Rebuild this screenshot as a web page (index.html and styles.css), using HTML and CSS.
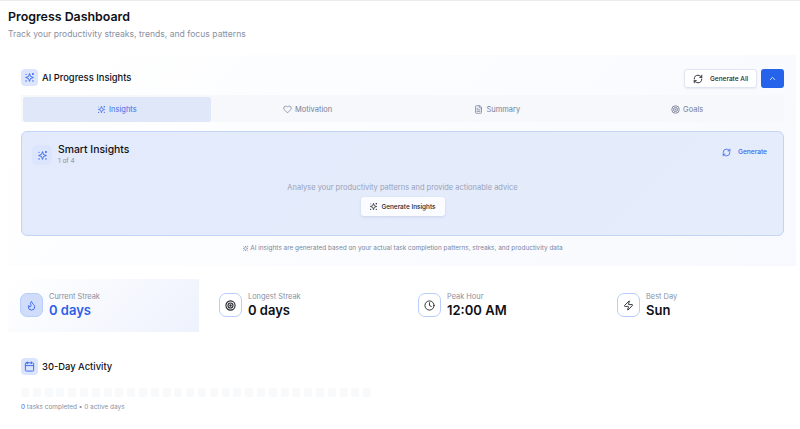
FILE: index.html
```html
<!DOCTYPE html>
<html lang="en">
<head>
<meta charset="utf-8">
<title>Progress Dashboard</title>
<link rel="stylesheet" href="styles.css">
</head>
<body>
<svg class="defs" width="0" height="0" aria-hidden="true">
  <symbol id="i-sparkle" viewBox="0 0 24 24">
    <path d="M12 3.500l2.200 6.300 6.300 2.200-6.300 2.200L12 20.500l-2.200-6.300L3.500 12l6.300-2.200z" fill="none" stroke="currentColor" stroke-width="2" stroke-linejoin="round"/>
    <circle cx="19.500" cy="4.500" r="2.100" fill="currentColor"/>
    <circle cx="19.500" cy="19.500" r="1.700" fill="currentColor"/>
    <circle cx="4.500" cy="19.500" r="1.700" fill="currentColor"/>
    <circle cx="4.500" cy="5" r="1.300" fill="currentColor"/>
  </symbol>
  <symbol id="i-refresh" viewBox="0 0 24 24">
    <path d="M3 12a9 9 0 0 1 9-9 9.750 9.750 0 0 1 6.740 2.740L21 8M21 3v5h-5M21 12a9 9 0 0 1-9 9 9.750 9.750 0 0 1-6.740-2.740L3 16M8 16H3v5" fill="none" stroke="currentColor" stroke-width="2.200" stroke-linecap="round" stroke-linejoin="round"/>
  </symbol>
</svg>
<main class="page">
  <header class="head">
    <h1>Progress Dashboard</h1>
    <p>Track your productivity streaks, trends, and focus patterns</p>
  </header>

  <section class="panel">
    <div class="panel-top">
      <div class="title-row">
        <span class="badge"><svg class="ic-badge"><use href="#i-sparkle"/></svg></span>
        <h2>AI Progress Insights</h2>
      </div>
      <div class="actions">
        <button class="btn-all"><svg class="ic-btn"><use href="#i-refresh"/></svg><span>Generate All</span></button>
        <button class="btn-up"><svg class="ic-sm" viewBox="0 0 24 24"><path d="M6 15l6-6 6 6" fill="none" stroke="currentColor" stroke-width="2.500" stroke-linecap="round" stroke-linejoin="round"/></svg></button>
      </div>
    </div>

    <nav class="tabs">
      <div class="tab active"><svg class="ic-sm"><use href="#i-sparkle"/></svg>Insights</div>
      <div class="tab"><svg class="ic-sm" viewBox="0 0 24 24"><path d="M19 14c1.490-1.460 3-3.210 3-5.500A5.500 5.500 0 0 0 16.500 3c-1.760 0-3 .5-4.500 2-1.500-1.500-2.740-2-4.500-2A5.500 5.500 0 0 0 2 8.500c0 2.300 1.500 4.050 3 5.500l7 7Z" fill="none" stroke="currentColor" stroke-width="2" stroke-linejoin="round"/></svg>Motivation</div>
      <div class="tab"><svg class="ic-sm" viewBox="0 0 24 24"><path d="M15 2H6a2 2 0 0 0-2 2v16a2 2 0 0 0 2 2h12a2 2 0 0 0 2-2V7ZM14 2v4a2 2 0 0 0 2 2h4M10 9H8M16 13H8M16 17H8" fill="none" stroke="currentColor" stroke-width="2" stroke-linecap="round" stroke-linejoin="round"/></svg>Summary</div>
      <div class="tab"><svg class="ic-sm" viewBox="0 0 24 24" fill="none" stroke="currentColor" stroke-width="2.400"><circle cx="12" cy="12" r="10"/><circle cx="12" cy="12" r="5.500"/><circle cx="12" cy="12" r="1.500"/></svg>Goals</div>
    </nav>

    <article class="card">
      <div class="card-top">
        <div class="card-title">
          <span class="badge big"><svg class="ic-badge"><use href="#i-sparkle"/></svg></span>
          <div>
            <h3>Smart Insights</h3>
            <small>1 of 4</small>
          </div>
        </div>
        <button class="btn-link"><svg class="ic-sm"><use href="#i-refresh"/></svg><span>Generate</span></button>
      </div>
      <div class="card-body">
        <p>Analyse your productivity patterns and provide actionable advice</p>
        <button class="btn-gen"><svg class="ic-sm"><use href="#i-sparkle"/></svg>Generate Insights</button>
      </div>
    </article>

    <p class="note"><svg class="ic-note"><use href="#i-sparkle"/></svg>AI insights are generated based on your actual task completion patterns, streaks, and productivity data</p>
  </section>

  <section class="stats">
    <div class="stat hot">
      <span class="stat-icon"><svg class="ic-stat" viewBox="0 0 24 24"><path d="M8.500 14.500A2.500 2.500 0 0 0 11 12c0-1.380-.5-2-1-3-1.072-2.143-.224-4.054 2-6 .5 2.500 2 4.900 4 6.500 2 1.600 3 3.500 3 5.500a7 7 0 1 1-14 0c0-1.153.433-2.294 1-3a2.500 2.500 0 0 0 2.500 2.500z" fill="none" stroke="currentColor" stroke-width="2" stroke-linecap="round" stroke-linejoin="round"/></svg></span>
      <div><div class="label">Current Streak</div><div class="value">0 days</div></div>
    </div>
    <div class="stat">
      <span class="stat-icon"><svg class="ic-stat" viewBox="0 0 24 24" fill="none" stroke="currentColor" stroke-width="2.400"><circle cx="12" cy="12" r="10"/><circle cx="12" cy="12" r="5.500"/><circle cx="12" cy="12" r="1.500"/></svg></span>
      <div><div class="label">Longest Streak</div><div class="value">0 days</div></div>
    </div>
    <div class="stat">
      <span class="stat-icon"><svg class="ic-stat" viewBox="0 0 24 24" fill="none" stroke="currentColor" stroke-width="2" stroke-linecap="round" stroke-linejoin="round"><circle cx="12" cy="12" r="10"/><path d="M12 6v6l4 2"/></svg></span>
      <div><div class="label">Peak Hour</div><div class="value">12:00 AM</div></div>
    </div>
    <div class="stat">
      <span class="stat-icon"><svg class="ic-stat" viewBox="0 0 24 24"><path d="M4 14a1 1 0 0 1-.78-1.630l9.900-10.200a.5.5 0 0 1 .86.460l-1.920 6.020A1 1 0 0 0 13 10h7a1 1 0 0 1 .78 1.630l-9.900 10.200a.5.5 0 0 1-.86-.460l1.920-6.020A1 1 0 0 0 11 14z" fill="none" stroke="currentColor" stroke-width="2" stroke-linecap="round" stroke-linejoin="round"/></svg></span>
      <div><div class="label">Best Day</div><div class="value">Sun</div></div>
    </div>
  </section>

  <section class="activity">
    <div class="title-row">
      <span class="badge"><svg class="ic-stat" viewBox="0 0 24 24" fill="none" stroke="currentColor" stroke-width="2" stroke-linecap="round" stroke-linejoin="round"><rect x="3" y="4" width="18" height="18" rx="2"/><path d="M16 2v4M8 2v4M3 10h18"/></svg></span>
      <h2>30-Day Activity</h2>
    </div>
    <div class="days">
      <i></i><i></i><i></i><i></i><i></i><i></i><i></i><i></i><i></i><i></i>
      <i></i><i></i><i></i><i></i><i></i><i></i><i></i><i></i><i></i><i></i>
      <i></i><i></i><i></i><i></i><i></i><i></i><i></i><i></i><i></i><i></i>
    </div>
    <p class="tally"><b>0</b> tasks completed • 0 active days</p>
  </section>
</main>
</body>
</html>
```

FILE: styles.css
```css
* { box-sizing: border-box; }
html, body { margin: 0; height: 100%; overflow: hidden; background: #fff; }
body { font-family: Inter, "Liberation Sans", sans-serif; color: #0f1117; }
.defs { position: absolute; }
svg { display: block; flex: none; }
.ic-note { width: 7px; height: 7px; }
.ic-sm { width: 9px; height: 9px; }
.ic-btn { width: 10px; height: 10px; }
.ic-stat { width: 11px; height: 11px; }
.ic-badge { width: 11px; height: 11px; }
button { font-family: inherit; cursor: pointer; }
h1, h2, h3, p { margin: 0; }

.page { border-top: 1px solid #ececee; padding: 0 4px 0 8px; }
.head { height: 54px; padding-top: 8px; }
.head h1 { font-size: 12.400px; line-height: 15px; font-weight: 600; }
.head p { font-size: 8.600px; line-height: 12px; color: #8a90a2; margin-top: 4px; }

.panel { height: 211px; padding: 14px 12px 0 13px; background: linear-gradient(135deg, #fff 0%, #f7f9fe 100%); }
.panel-top { display: flex; justify-content: space-between; align-items: center; height: 17px; }
.title-row { display: flex; align-items: center; gap: 4px; }
.title-row h2 { font-size: 9.400px; font-weight: 500; }
.badge { width: 17px; height: 17px; border-radius: 4px; background: #dbe5fd; color: #3b66ee; display: flex; align-items: center; justify-content: center; }
.actions { display: flex; gap: 4px; margin-top: 2px; }
.btn-all { width: 73px; height: 19px; padding: 0 0 0 8px; background: #fff; border: 1px solid #dfe5f2; border-radius: 3px; display: flex; align-items: center; gap: 7px; font-size: 6.500px; font-weight: 500; color: #22252c; box-shadow: 0 1px 2px rgba(30, 50, 110, .08); }
.btn-up { width: 23px; height: 19px; padding: 0; background: #2563eb; border: 0; border-radius: 3px; color: #dbe6ff; display: flex; align-items: center; justify-content: center; }

.tabs { display: grid; grid-template-columns: repeat(4, 1fr); margin-top: 9px; height: 27px; padding: 2px 2px 0; background: #f6f8fc; }
.tab { display: flex; align-items: center; justify-content: center; gap: 3px; font-size: 7.500px; font-weight: 400; color: #777e96; }
.tab.active { margin-right: 2px; background: #dfe7f8; border-radius: 3px; color: #3f68e6; }

.card { margin-top: 9px; height: 105px; padding: 10px 16px 0 10px; border: 1px solid #c4d4f5; border-radius: 6px; background: linear-gradient(135deg, #e3eafb 0%, #e5ecfb 100%); }
.card-top { display: flex; justify-content: space-between; }
.card-title { display: flex; align-items: flex-start; gap: 6px; }
.badge.big { width: 20px; height: 20px; border-radius: 5px; margin-top: 3px; }
.card-title h3 { font-size: 10.400px; line-height: 13px; font-weight: 500; margin-top: 1px; }
.card-title small { display: block; font-size: 6.500px; line-height: 8px; color: #8a90a2; margin-top: 1px; }
.btn-link { display: flex; align-items: center; gap: 7px; height: 20px; padding: 0; background: none; border: 0; color: #3b66ee; font-size: 6.600px; font-weight: 500; }
.card-body { display: flex; flex-direction: column; align-items: center; padding: 17px 0 0 6px; }
.card-body p { font-size: 7.500px; line-height: 11px; color: #9aa2b8; }
.btn-gen { margin-top: 4px; width: 84px; height: 19px; padding: 0; background: #fbfcff; border: 0; border-radius: 3px; display: flex; align-items: center; justify-content: center; gap: 3px; font-size: 6.450px; font-weight: 500; color: #22252c; box-shadow: 0 1px 3px rgba(30, 50, 110, .12); }

.note { margin-top: 8px; display: flex; justify-content: center; align-items: center; gap: 1px; font-size: 6.450px; line-height: 8px; color: #7e869c; }

.stats { display: grid; grid-template-columns: repeat(4, 1fr); gap: 8px; margin-top: 13px; }
.stat { display: flex; align-items: center; gap: 6px; height: 53px; padding-left: 12px; }
.stat.hot { background: linear-gradient(135deg, #fff 0%, #eef2fd 100%); }
.stat > div { margin-top: -1px; }
.stat-icon { width: 23px; height: 24px; margin-top: -1px; border: 1px solid #b8cdfa; border-radius: 7px; background: #fff; color: #24262c; display: flex; align-items: center; justify-content: center; }
.hot .stat-icon { background: #cfdcfa; color: #3b66ee; }
.label { font-size: 7.400px; line-height: 10px; color: #8a90a2; }
.value { font-size: 13px; line-height: 16px; font-weight: 600; }
.hot .value { color: #2f5fe8; }

.activity { margin-top: 26px; padding-left: 13px; }
.days { display: flex; gap: 3.800px; margin-top: 13px; }
.days i { display: block; width: 8px; height: 9px; border-radius: 2px; background: #f8f9fb; }
.tally { margin-top: 6px; font-size: 6.450px; line-height: 8px; color: #8a90a2; }
.tally b { font-weight: 400; color: #3b66ee; }
```
